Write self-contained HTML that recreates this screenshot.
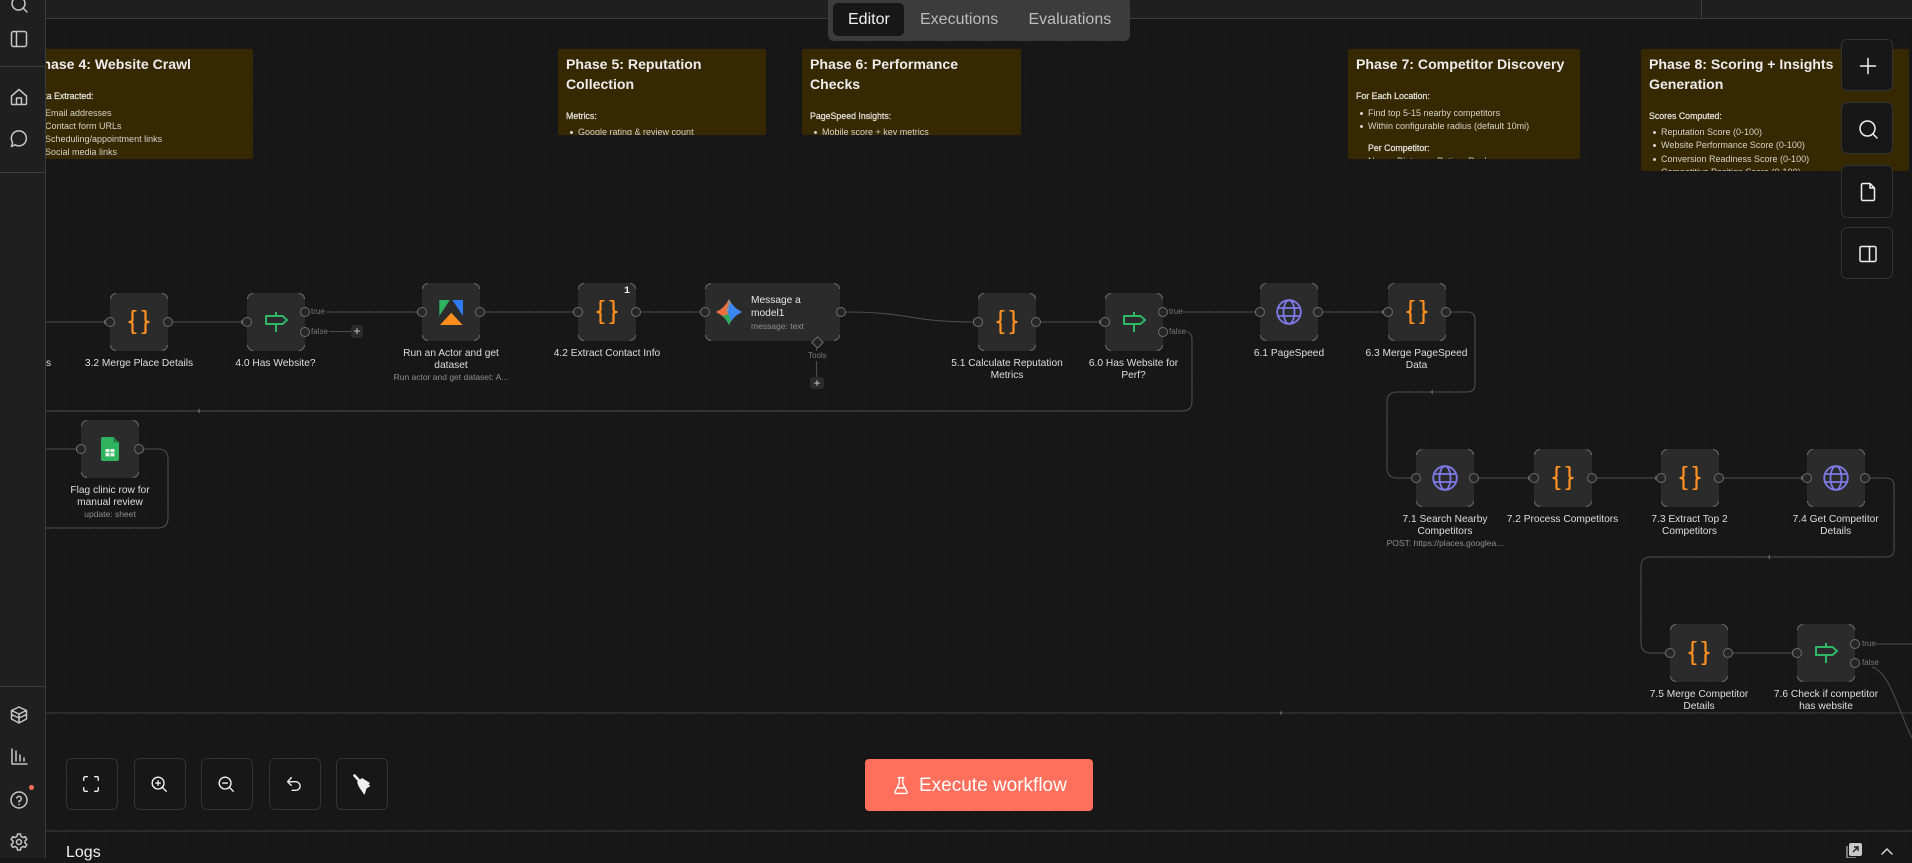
<!DOCTYPE html>
<html><head><meta charset="utf-8"><title>Workflow</title>
<style>
html,body{margin:0;padding:0;width:1912px;height:858px;overflow:hidden;background:#171717;font-family:"Liberation Sans",sans-serif}
#canvas{position:absolute;left:0;top:0;width:1912px;height:858px;background-color:#171717;background-image:radial-gradient(circle,#222 0.6px,transparent 0.8px);background-size:10px 10px}
.abs{position:absolute}
.top{position:absolute;left:0;top:0;width:1912px;height:18px;background:#1f1f1f;border-bottom:1px solid #3d3d3d}
.side{position:absolute;left:0;top:0;width:45px;height:858px;background:#1f1f1f;border-right:1px solid #3d3d3d;z-index:5}
.side hr{position:absolute;left:0;width:45px;margin:0;border:0;border-top:1px solid #3d3d3d}
.side svg{position:absolute;fill:none;stroke:#c6c6c6;stroke-width:1.5;stroke-linecap:round;stroke-linejoin:round}
.tabs{position:absolute;left:828px;top:-4px;width:302px;height:45px;background:#3c3c3c;border-radius:6px;z-index:4}
.tab{position:absolute;top:0;height:40px;line-height:40px;font-size:16px;color:#bdbdbd;white-space:nowrap}
.tabon{position:absolute;left:833px;top:3px;width:71px;height:33px;background:#171717;border-radius:5px;z-index:4}
.s{position:absolute;background:#362801;border-radius:2px;overflow:hidden}
.s div{position:absolute;white-space:nowrap}
.t{font-size:14.1px;font-weight:bold;color:#ededed;line-height:20px;left:8px;margin-top:-1px}
.h{font-size:8.8px;color:#e2e0da;line-height:12px;left:8px;-webkit-text-stroke:.25px #e2e0da;margin-top:-.5px}
.i{font-size:9px;color:#d6d3c9;line-height:12px;left:20px;margin-top:-.5px}
.i:before{content:"";position:absolute;left:-8px;top:5px;width:3px;height:3px;border-radius:50%;background:#d6d3c9}
.n{position:absolute;width:58px;height:58px;background:#2b2b2b;border-radius:6px}
.n:before{content:"";position:absolute;inset:0;border:1.2px solid #6f6f6f;border-radius:6px;box-sizing:border-box;
-webkit-mask:linear-gradient(#000 0 0) 0 0/6px 6px no-repeat,linear-gradient(#000 0 0) 100% 0/6px 6px no-repeat,linear-gradient(#000 0 0) 0 100%/6px 6px no-repeat,linear-gradient(#000 0 0) 100% 100%/6px 6px no-repeat;
mask:linear-gradient(#000 0 0) 0 0/6px 6px no-repeat,linear-gradient(#000 0 0) 100% 0/6px 6px no-repeat,linear-gradient(#000 0 0) 0 100%/6px 6px no-repeat,linear-gradient(#000 0 0) 100% 100%/6px 6px no-repeat}
.n svg{position:absolute;left:17px;top:17px}
.p{position:absolute;width:10px;height:10px;border:1.1px solid #6e6e6e;border-radius:50%;background:#262626;box-sizing:border-box;z-index:2}
.l{position:absolute;width:140px;text-align:center;font-size:10.2px;line-height:12px;color:#dedede;white-space:nowrap;margin-top:1px}
.sub{color:#8f8f8f;font-size:8.5px;position:relative;top:-1px}
.lb{position:absolute;font-size:8px;color:#777;line-height:10px}
.b{position:absolute;width:52px;height:52px;box-sizing:border-box;background:#171717;border:1px solid #333;border-radius:6px;z-index:3}
.b svg{position:absolute;left:15px;top:15px;fill:none;stroke:#f0f0f0;stroke-width:1.5;stroke-linecap:round;stroke-linejoin:round}
.b.sm svg{left:14px;top:15px;width:20px;height:20px;stroke-width:1.5}
.plus{position:absolute;background:#2b2b2b;border-radius:3px;color:#cfcfcf;font-size:12px;line-height:13px;text-align:center}
</style></head><body>
<div id="canvas"></div>
<svg width="0" height="0" style="position:absolute">
<defs><clipPath id="star"><path d="M15 2Q19 11 28 15Q19 19 15 28Q11 19 2 15Q11 11 15 2Z"/></clipPath></defs>
<symbol id="code" viewBox="0 0 24 24"><path fill="none" stroke="#ff9022" stroke-width="2.200" stroke-linecap="round" stroke-linejoin="round" d="M8.500 0.500H7C5.800 0.500 5.500 1.500 5.500 2.500V9.500C5.500 11 4.500 12 2.500 12 4.500 12 5.500 13 5.500 14.500V21.500C5.500 22.500 5.800 23.500 7 23.500H8.500M15.500 0.500H17C18.200 0.500 18.500 1.500 18.500 2.500V9.500C18.500 11 19.500 12 21.500 12 19.500 12 18.500 13 18.500 14.500V21.500C18.500 22.500 18.200 23.500 17 23.500H15.500"/></symbol>
<symbol id="if" viewBox="0 0 24 24"><path fill="none" stroke="#2fb866" stroke-width="2" stroke-linejoin="round" d="M12 2V6M12 14V22M2 6H18.500L23 10 18.500 14H2Z"/></symbol>
<symbol id="globe" viewBox="0 0 26 26"><g fill="none" stroke="#7f7be8" stroke-width="1.800"><circle cx="13" cy="13" r="11.800"/><ellipse cx="13" cy="13" rx="5.500" ry="11.800"/><path d="M2 9H24M2 17H24"/></g></symbol>
</svg>

<svg class="abs" style="left:0;top:0" width="1912" height="858" fill="none" stroke="#4c4c4c" stroke-width="1.100">
<path d="M46 322H104M173 322H241M326 312H417M329 331.500H351M485 312H573M641 312H700M846 312C910 312 910 322 973 322M1041 322H1099M1183 312H1255M1323 312H1382M1479 478H1528M1597 478H1655M1724 478H1801M46 449H76M1733 653H1792M1875 644H1912"/>
<path d="M144 449H158Q168 449 168 459V518Q168 528 158 528H46"/>
<path d="M1186 332Q1192 332 1192 340V401Q1192 411 1182 411H46"/>
<path d="M1451 312H1467Q1475 312 1475 320V384Q1475 392 1467 392H1397Q1387 392 1387 402V468Q1387 478 1397 478H1411"/>
<path d="M1870 478H1886Q1894 478 1894 486V549Q1894 557 1886 557H1651Q1641 557 1641 567V643Q1641 653 1651 653H1665"/>
<path d="M1872 667C1890 672 1898 710 1912 738"/>
<path d="M46 713H1912M46 831H1912" stroke="#3f3f3f"/>
<path d="M816.500 347V377"/>
<g fill="#5c5c5c" stroke="none"><path d="M104 319.500l3 2.500-3 2.500zM241 319.500l3 2.500-3 2.500zM417 309.500l3 2.500-3 2.500zM573 309.500l3 2.500-3 2.500zM700 309.500l3 2.500-3 2.500zM973 319.500l3 2.500-3 2.500zM1099 319.500l3 2.500-3 2.500zM1255 309.500l3 2.500-3 2.500zM1382 309.500l3 2.500-3 2.500zM1528 475.500l3 2.500-3 2.500zM1655 475.500l3 2.500-3 2.500zM1801 475.500l3 2.500-3 2.500zM76 446.500l3 2.500-3 2.500zM1792 650.500l3 2.500-3 2.500zM1665 650.500l3 2.500-3 2.500zM200 408.500l-3 2.500 3 2.500zM1433 389.500l-3 2.500 3 2.500zM1770 554.500l-3 2.500 3 2.500zM1282 710.500l-3 2.500 3 2.500z"/></g>
</svg>

<div class="top"></div>
<div class="abs" style="left:1701px;top:0;width:1px;height:18px;background:#3d3d3d"></div>

<div class="s" style="left:25px;top:49px;width:228px;height:110px">
<div class="t" style="top:6px">Phase 4: Website Crawl</div>
<div class="h" style="top:41px">Data Extracted:</div>
<div class="i" style="top:58px">Email addresses</div>
<div class="i" style="top:71px">Contact form URLs</div>
<div class="i" style="top:84px">Scheduling/appointment links</div>
<div class="i" style="top:97px">Social media links</div>
</div>
<div class="s" style="left:558px;top:49px;width:208px;height:86px">
<div class="t" style="top:6px">Phase 5: Reputation</div>
<div class="t" style="top:26px">Collection</div>
<div class="h" style="top:61px">Metrics:</div>
<div class="i" style="top:77px">Google rating &amp; review count</div>
</div>
<div class="s" style="left:802px;top:49px;width:219px;height:86px">
<div class="t" style="top:6px">Phase 6: Performance</div>
<div class="t" style="top:26px">Checks</div>
<div class="h" style="top:61px">PageSpeed Insights:</div>
<div class="i" style="top:77px">Mobile score + key metrics</div>
</div>
<div class="s" style="left:1348px;top:49px;width:232px;height:110px">
<div class="t" style="top:6px">Phase 7: Competitor Discovery</div>
<div class="h" style="top:41px">For Each Location:</div>
<div class="i" style="top:58px">Find top 5-15 nearby competitors</div>
<div class="i" style="top:71px">Within configurable radius (default 10mi)</div>
<div class="h" style="top:93px;left:20px">Per Competitor:</div>
<div class="i" style="top:106px;left:20px">Name, Distance, Rating, Rank</div>
</div>
<div class="s" style="left:1641px;top:49px;width:268px;height:122px">
<div class="t" style="top:6px">Phase 8: Scoring + Insights</div>
<div class="t" style="top:26px">Generation</div>
<div class="h" style="top:61px">Scores Computed:</div>
<div class="i" style="top:77px">Reputation Score (0-100)</div>
<div class="i" style="top:90px">Website Performance Score (0-100)</div>
<div class="i" style="top:104px">Conversion Readiness Score (0-100)</div>
<div class="i" style="top:117px">Competitive Position Score (0-100)</div>
</div>

<!-- nodes -->
<div class="n" style="left:110px;top:293px"><svg width="24" height="24"><use href="#code"/></svg></div>
<div class="p" style="left:105px;top:317px"></div><div class="p" style="left:163px;top:317px"></div>
<div class="l" style="left:69px;top:357px">3.2 Merge Place Details</div>
<div class="abs" style="left:46px;top:358px;color:#dedede;font-size:10.2px;line-height:12px;z-index:1">s</div>

<div class="n" style="left:246.500px;top:293px"><svg width="24" height="24"><use href="#if"/></svg></div>
<div class="p" style="left:241.500px;top:317px"></div><div class="p" style="left:299.500px;top:307px"></div><div class="p" style="left:299.500px;top:327px"></div>
<div class="lb" style="left:311px;top:307px">true</div><div class="lb" style="left:311px;top:327px">false</div>
<div class="plus" style="left:351px;top:325px;width:12px;height:13px">+</div>
<div class="l" style="left:205.500px;top:357px">4.0 Has Website?</div>

<div class="n" style="left:422px;top:283px"><svg width="58" height="58" style="left:0;top:0"><path fill="#2fb35f" d="M17.300 17H27.800L17.300 33Z"/><path fill="#2f7bf6" d="M30.300 17H41V33Z"/><path fill="#ff8e1f" d="M29.300 29.700 40.700 42H18Z"/></svg></div>
<div class="p" style="left:417px;top:307px"></div><div class="p" style="left:475px;top:307px"></div>
<div class="l" style="left:381px;top:347px">Run an Actor and get<br>dataset<br><span class="sub">Run actor and get dataset: A...</span></div>

<div class="n" style="left:578px;top:283px"><svg width="24" height="24"><use href="#code"/></svg><div class="abs" style="left:46px;top:3px;color:#f2f2f2;font:bold 10px/12px 'Liberation Mono',monospace">1</div></div>
<div class="p" style="left:573px;top:307px"></div><div class="p" style="left:631px;top:307px"></div>
<div class="l" style="left:537px;top:347px">4.2 Extract Contact Info</div>

<div class="n" style="left:705px;top:283px;width:135px"><svg width="30" height="30" style="left:9px;top:14px" viewBox="0 0 30 30"><g clip-path="url(#star)"><rect width="30" height="30" fill="#8d8f96"/><path fill="#ef6f3c" d="M0 15 15 3 12 15 15 17 6 24 0 24Z"/><path fill="#2fa85a" d="M8 19 15 17 22 19 15 30Z"/><path fill="#3a86f5" d="M30 15 16 6 14 15 17 24Z"/></g></svg>
<div class="abs" style="left:46px;top:11px;color:#e4e4e4;font-size:10.200px;line-height:13px;white-space:nowrap">Message a<br>model1<br><span style="color:#8f8f8f;font-size:8.500px;line-height:11px">message: text</span></div></div>
<div class="p" style="left:700px;top:307px"></div><div class="p" style="left:836px;top:307px"></div>
<div class="abs" style="left:812.500px;top:338px;width:7px;height:7px;border:1.200px solid #6f6f6f;background:#232323;transform:rotate(45deg);z-index:2"></div>
<div class="lb" style="left:807px;top:351px;background:#171717;padding:0 1px;font-size:8px">Tools</div>
<div class="plus" style="left:810px;top:377px;width:14px;height:12px;line-height:12px;border:0">+</div>

<div class="n" style="left:978px;top:293px"><svg width="24" height="24"><use href="#code"/></svg></div>
<div class="p" style="left:973px;top:317px"></div><div class="p" style="left:1031px;top:317px"></div>
<div class="l" style="left:937px;top:357px">5.1 Calculate Reputation<br>Metrics</div>

<div class="n" style="left:1104.500px;top:293px"><svg width="24" height="24"><use href="#if"/></svg></div>
<div class="p" style="left:1099.500px;top:317px"></div><div class="p" style="left:1157.500px;top:307px"></div><div class="p" style="left:1157.500px;top:327px"></div>
<div class="lb" style="left:1169px;top:307px">true</div><div class="lb" style="left:1169px;top:327px">false</div>
<div class="l" style="left:1063.500px;top:357px">6.0 Has Website for<br>Perf?</div>

<div class="n" style="left:1260px;top:283px"><svg width="26" height="26" style="left:16px;top:16px"><use href="#globe"/></svg></div>
<div class="p" style="left:1255px;top:307px"></div><div class="p" style="left:1313px;top:307px"></div>
<div class="l" style="left:1219px;top:347px">6.1 PageSpeed</div>

<div class="n" style="left:1387.500px;top:283px"><svg width="24" height="24"><use href="#code"/></svg></div>
<div class="p" style="left:1382.500px;top:307px"></div><div class="p" style="left:1440.500px;top:307px"></div>
<div class="l" style="left:1346.500px;top:347px">6.3 Merge PageSpeed<br>Data</div>

<div class="n" style="left:1416px;top:449px"><svg width="26" height="26" style="left:16px;top:16px"><use href="#globe"/></svg></div>
<div class="p" style="left:1411px;top:473px"></div><div class="p" style="left:1469px;top:473px"></div>
<div class="l" style="left:1375px;top:513px">7.1 Search Nearby<br>Competitors<br><span class="sub">POST: https://places.googlea...</span></div>

<div class="n" style="left:1533.500px;top:449px"><svg width="24" height="24"><use href="#code"/></svg></div>
<div class="p" style="left:1528.500px;top:473px"></div><div class="p" style="left:1586.500px;top:473px"></div>
<div class="l" style="left:1492.500px;top:513px">7.2 Process Competitors</div>

<div class="n" style="left:1660.500px;top:449px"><svg width="24" height="24"><use href="#code"/></svg></div>
<div class="p" style="left:1655.500px;top:473px"></div><div class="p" style="left:1713.500px;top:473px"></div>
<div class="l" style="left:1619.500px;top:513px">7.3 Extract Top 2<br>Competitors</div>

<div class="n" style="left:1806.700px;top:449px"><svg width="26" height="26" style="left:16px;top:16px"><use href="#globe"/></svg></div>
<div class="p" style="left:1801.700px;top:473px"></div><div class="p" style="left:1859.700px;top:473px"></div>
<div class="l" style="left:1765.700px;top:513px">7.4 Get Competitor<br>Details</div>

<div class="n" style="left:1670px;top:624px"><svg width="24" height="24"><use href="#code"/></svg></div>
<div class="p" style="left:1665px;top:648px"></div><div class="p" style="left:1723px;top:648px"></div>
<div class="l" style="left:1629px;top:688px">7.5 Merge Competitor<br>Details</div>

<div class="n" style="left:1797px;top:624px"><svg width="24" height="24"><use href="#if"/></svg></div>
<div class="p" style="left:1792px;top:648px"></div><div class="p" style="left:1850px;top:639px"></div><div class="p" style="left:1850px;top:658px"></div>
<div class="lb" style="left:1862px;top:639px">true</div><div class="lb" style="left:1862px;top:658px">false</div>
<div class="l" style="left:1756px;top:688px">7.6 Check if competitor<br>has website</div>

<div class="n" style="left:81px;top:420px"><svg width="18" height="24" style="left:20px;top:17px" viewBox="0 0 20 26" preserveAspectRatio="none"><path fill="#2fb35f" d="M2 0H14L20 6V24Q20 26 18 26H2Q0 26 0 24V2Q0 0 2 0Z"/><path fill="#1f7a41" d="M14 0L20 6H14Z"/><rect x="5" y="13" width="10" height="8" fill="#e8f5ec"/><path stroke="#2fb35f" d="M10 13V21M5 17H15"/></svg></div>
<div class="p" style="left:76px;top:444px"></div><div class="p" style="left:134px;top:444px"></div>
<div class="l" style="left:40px;top:484px">Flag clinic row for<br>manual review<br><span class="sub">update: sheet</span></div>

<!-- tabs -->
<div class="tabs"></div><div class="tabon"></div>
<div class="tab" style="left:848px;color:#f0f0f0;z-index:5">Editor</div>
<div class="tab" style="left:920px;z-index:5">Executions</div>
<div class="tab" style="left:1028.500px;z-index:5">Evaluations</div>

<!-- right buttons -->
<div class="b" style="left:1841px;top:39px"><svg width="22" height="22" viewBox="0 0 22 22"><path d="M11 3.500V18.500M3.500 11H18.500"/></svg></div>
<div class="b" style="left:1841px;top:102px"><svg width="22" height="22" viewBox="0 0 22 22"><circle cx="10.500" cy="10.500" r="7.500"/><path d="M16 16 20 20"/></svg></div>
<div class="b" style="left:1841px;top:164.500px;height:53px"><svg width="22" height="22" viewBox="0 0 22 22"><path d="M13 2.500H6A1.500 1.500 0 0 0 4.500 4V18A1.500 1.500 0 0 0 6 19.500H16A1.500 1.500 0 0 0 17.500 18V7ZM13 2.500V7H17.500"/></svg></div>
<div class="b" style="left:1841px;top:227px"><svg width="22" height="22" viewBox="0 0 22 22"><rect x="3" y="3.500" width="16" height="15" rx="1.500"/><path d="M12.500 3.500V18.500"/></svg></div>

<!-- bottom buttons -->
<div class="b sm" style="left:66px;top:758px"><svg viewBox="0 0 22 22"><path d="M3 7V4.500A1.500 1.500 0 0 1 4.500 3H7M15 3H17.500A1.500 1.500 0 0 1 19 4.500V7M19 15V17.500A1.500 1.500 0 0 1 17.500 19H15M7 19H4.500A1.500 1.500 0 0 1 3 17.500V15"/></svg></div>
<div class="b sm" style="left:133.500px;top:758px"><svg viewBox="0 0 22 22"><circle cx="10" cy="10" r="6.500"/><path d="M15 15 19 19M7.500 10H12.500M10 7.500V12.500"/></svg></div>
<div class="b sm" style="left:201px;top:758px"><svg viewBox="0 0 22 22"><circle cx="10" cy="10" r="6.500"/><path d="M15 15 19 19M7.500 10H12.500"/></svg></div>
<div class="b sm" style="left:268.500px;top:758px"><svg viewBox="0 0 22 22"><path d="M8 4 4 8.500 8 12.500M4 8.500H13A4.500 4.500 0 0 1 13 18H9"/></svg></div>
<div class="b" style="left:336px;top:758px"><svg width="22" height="22" viewBox="0 0 22 22"><path stroke-width="2.600" d="M2.500 1.500 7.500 7"/><path fill="#f0f0f0" stroke="none" d="M5 8 10 4 18 9 16.500 10.500 18.500 12 14.500 14.500 12.500 21 7 13Z"/></svg></div>

<div class="abs" style="left:865px;top:759px;width:228px;height:52px;background:#ff6f5c;border-radius:4px;z-index:3"><svg class="abs" style="left:28px;top:17px" width="16" height="19" viewBox="0 0 22 24" preserveAspectRatio="none" fill="none" stroke="#fff" stroke-width="1.800" stroke-linecap="round" stroke-linejoin="round"><path d="M7 2H15M8.500 2V9.500L3 19.500A1.500 1.500 0 0 0 4.500 22H17.500A1.500 1.500 0 0 0 19 19.500L13.500 9.500V2M5.500 15H16.500"/></svg>
<div class="abs" style="left:54px;top:0;line-height:54px;font-size:19px;color:#fff;white-space:nowrap">Execute workflow</div></div>

<div class="abs" style="left:66px;top:843px;font-size:16px;line-height:20px;color:#f0f0f0">Logs</div>
<svg class="abs" style="left:1846px;top:842px" width="18" height="16" viewBox="0 0 18 16"><rect x="3" y="1" width="13" height="13" rx="2" fill="#c9c9c9"/><path d="M1 4V16H10" stroke="#9a9a9a" fill="none" stroke-width="1.500"/><path d="M7 10 12 5M8 5H12V9" stroke="#222" fill="none" stroke-width="1.400"/></svg>
<svg class="abs" style="left:1880px;top:847px" width="14" height="9" viewBox="0 0 14 9"><path d="M2 7 7 2 12 7" stroke="#d5d5d5" fill="none" stroke-width="1.500" stroke-linecap="round"/></svg>

<!-- sidebar -->
<div class="side">
<svg style="left:10px;top:-5px" width="18" height="18" viewBox="0 0 18 18"><circle cx="8.500" cy="8.500" r="6.500"/><path d="M13 13 17 17"/></svg>
<svg style="left:10px;top:30px" width="18" height="18" viewBox="0 0 18 18"><rect x="1.500" y="1.500" width="15" height="15" rx="2"/><path d="M6.500 1.500V16.500"/></svg>
<hr style="top:66px">
<svg style="left:10px;top:88px" width="18" height="18" viewBox="0 0 18 18"><path d="M1.500 8 9 1.500 16.500 8V15.500A1 1 0 0 1 15.500 16.500H2.500A1 1 0 0 1 1.500 15.500ZM6.500 16.500V10H11.500V16.500"/></svg>
<svg style="left:10px;top:130px" width="18" height="18" viewBox="0 0 18 18"><path d="M5 14.800A7.500 7.500 0 1 0 2.600 12.500L1.500 16.500Z"/></svg>
<hr style="top:172px">
<hr style="top:686px">
<svg style="left:10px;top:706px" width="18" height="18" viewBox="0 0 18 18"><path d="M9 1 16.500 4.500V13L9 17 1.500 13V4.500ZM1.500 4.500 9 8 16.500 4.500M9 8V17M1.500 8.500 9 12 16.500 8.500"/></svg>
<svg style="left:10px;top:748px" width="18" height="18" viewBox="0 0 18 18"><path d="M2 1V16H17M6 3V13M10 7V13M14 10V13"/></svg>
<svg style="left:10px;top:791px" width="18" height="18" viewBox="0 0 18 18"><circle cx="9" cy="9" r="8"/><path d="M6.800 7A2.300 2.300 0 1 1 9 10V11M9 13.500V13.600"/></svg>
<div class="abs" style="left:29px;top:785px;width:5px;height:5px;border-radius:50%;background:#ff6f5c"></div>
<svg style="left:10px;top:833px" width="18" height="18" viewBox="0 0 18 18"><path d="M7.500 1H10.500L11 3.400 13 4.500 15.300 3.700 16.800 6.300 15 8V10L16.800 11.700 15.300 14.300 13 13.500 11 14.600 10.500 17H7.500L7 14.600 5 13.500 2.700 14.300 1.200 11.700 3 10V8L1.200 6.300 2.700 3.700 5 4.500 7 3.400Z"/><circle cx="9" cy="9" r="2.500"/></svg>
</div>
</body></html>
